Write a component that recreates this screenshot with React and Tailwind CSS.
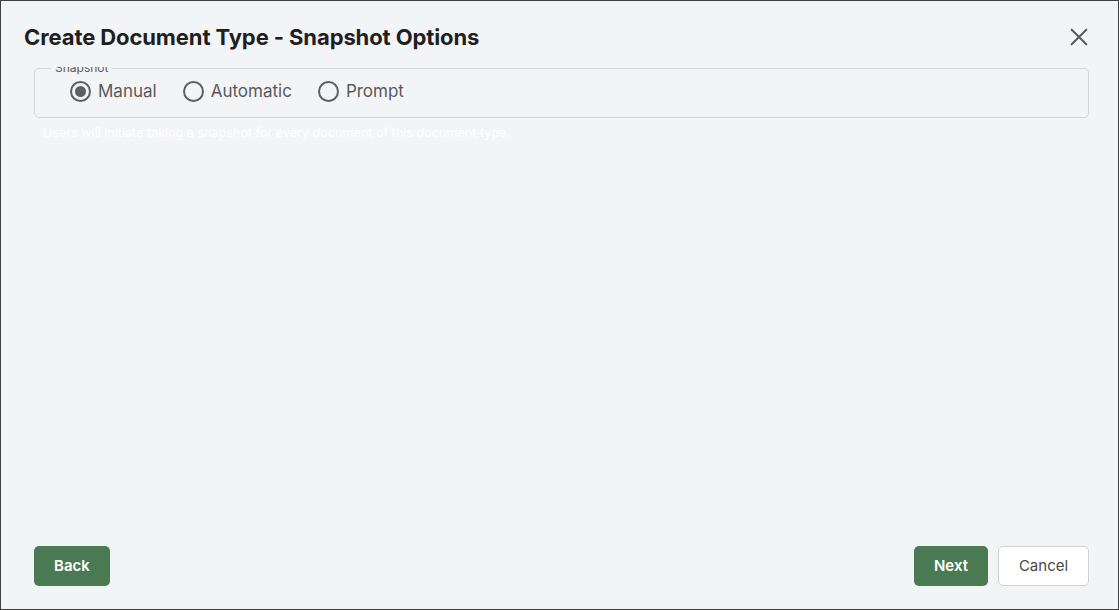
import { useState } from 'react';

const OPTIONS = ['Manual', 'Automatic', 'Prompt'];

function Radio({ label, checked, onChange }) {
  return (
    <label className="flex items-center gap-[7px] cursor-pointer" onClick={onChange}>
      <span className="w-[21px] h-[21px] rounded-full border-2 border-[#5f5f5f] flex items-center justify-center">
        {checked && <span className="w-[11px] h-[11px] rounded-full bg-[#5f5f5f]" />}
      </span>
      <span className="text-[17px] text-[#5a5a5a]">{label}</span>
    </label>
  );
}

export default function App() {
  const [mode, setMode] = useState('Manual');

  return (
    <div
      className="w-[1119px] h-[610px] bg-[#f3f4f6] border border-[#3f3f3f] flex flex-col"
      style={{ fontFamily: 'Inter, "Noto Sans", sans-serif' }}
    >
      {/* Header */}
      <div className="h-[66px] flex items-center justify-between pl-[23px] pr-[28px] pt-[6px] shrink-0">
        <h1 className="text-[22px] font-bold text-[#1f1f1f] tracking-[-0.1px]">
          Create Document Type - Snapshot Options
        </h1>
        <button className="text-[#5a5a5a]">
          <svg width="22" height="22" viewBox="0 0 24 24" fill="none" stroke="currentColor" strokeWidth="2.2" strokeLinecap="round">
            <path d="M4 4L20 20M20 4L4 20" />
          </svg>
        </button>
      </div>

      {/* Body */}
      <div className="flex-1 overflow-hidden pl-[33px] pr-[29px]">
        <fieldset className="mt-[-7px] border border-[#d6d7d9] rounded-[5px] pl-[35px] pr-4 pb-[12px] pt-[3px]">
          <legend className="ml-[-19px] px-[4px] text-[12px] leading-[16px] text-[#5a5a5a]">Snapshot</legend>
          <div className="flex items-center gap-[26px]">
            {OPTIONS.map((o) => (
              <Radio key={o} label={o} checked={mode === o} onChange={() => setMode(o)} />
            ))}
          </div>
        </fieldset>
        <p className="mt-[6px] ml-[9px] text-[12.6px] text-white">
          Users will initiate taking a snapshot for every document of this document type.
        </p>
      </div>

      {/* Footer */}
      <div className="h-[64px] flex items-start justify-between pl-[33px] pr-[29px] pt-[1px] shrink-0">
        <button className="h-[40px] px-[20px] rounded-[5px] bg-[#4a7a52] text-white text-[15px] font-semibold">
          Back
        </button>
        <div className="flex gap-[10px]">
          <button className="h-[40px] px-[20px] rounded-[5px] bg-[#4a7a52] text-white text-[15px] font-semibold">
            Next
          </button>
          <button className="h-[40px] w-[91px] rounded-[5px] bg-white border border-[#d0d1d3] text-[#4a4a4a] text-[15px]">
            Cancel
          </button>
        </div>
      </div>
    </div>
  );
}
